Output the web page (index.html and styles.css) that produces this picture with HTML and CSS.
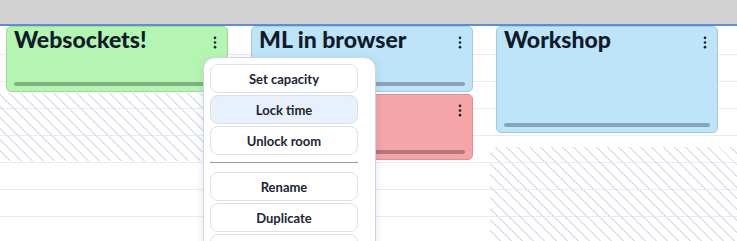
FILE: index.html
```html
<!DOCTYPE html>
<html lang="en">
<head>
  <meta charset="UTF-8" />
  <title>Schedule</title>
  <link rel="stylesheet" href="styles.css">
</head>
<body>

  <div class="topbar"></div>

  <div class="board">
    <div class="col">
      <div class="blocked blocked-a"></div>
      <div class="slot slot-green slot-short">
        <h2>Websockets!</h2>
        <span class="kebab"><svg viewBox="0 0 4 14"><circle cx="2" cy="2" r="1.4"/><circle cx="2" cy="7" r="1.4"/><circle cx="2" cy="12" r="1.4"/></svg></span>
        <div class="bar"></div>
      </div>
    </div>

    <div class="col">
      <div class="slot slot-blue slot-short">
        <h2>ML in browser</h2>
        <span class="kebab"><svg viewBox="0 0 4 14"><circle cx="2" cy="2" r="1.4"/><circle cx="2" cy="7" r="1.4"/><circle cx="2" cy="12" r="1.4"/></svg></span>
        <div class="bar"></div>
      </div>
      <div class="slot slot-red slot-second">
        <h2></h2>
        <span class="kebab"><svg viewBox="0 0 4 14"><circle cx="2" cy="2" r="1.4"/><circle cx="2" cy="7" r="1.4"/><circle cx="2" cy="12" r="1.4"/></svg></span>
        <div class="bar"></div>
      </div>
    </div>

    <div class="col">
      <div class="slot slot-blue slot-long">
        <h2>Workshop</h2>
        <span class="kebab"><svg viewBox="0 0 4 14"><circle cx="2" cy="2" r="1.4"/><circle cx="2" cy="7" r="1.4"/><circle cx="2" cy="12" r="1.4"/></svg></span>
        <div class="bar"></div>
      </div>
      <div class="blocked blocked-b"></div>
    </div>
  </div>

  <!-- context menu -->
  <div class="menu">
    <button>Set capacity</button>
    <button class="active">Lock time</button>
    <button>Unlock room</button>
    <hr>
    <button>Rename</button>
    <button>Duplicate</button>
    <button></button>
  </div>

</body>
</html>
```

FILE: styles.css
```css
body {
  margin: 0;
  font-family: 'Lato', 'Open Sans', sans-serif;
  background-color: #fff;
  color: #0f1b2b;
  overflow: hidden;
  height: 241px;
}

.topbar {
  height: 24px;
  background-color: #d3d3d3;
  border-bottom: 2px solid #5b8fd2;
}

.board {
  display: grid;
  grid-template-columns: 245px 245px 247px;
  height: 215px;
}

.col {
  position: relative;
  background-image: repeating-linear-gradient(to bottom, transparent 0 26px, #e8ebf0 26px 27px);
  background-position: 0 2px;
}

.blocked {
  position: absolute;
  left: 0;
  right: 0;
  background-image: repeating-linear-gradient(45deg, transparent 0 6.5px, #dce1ea 6.5px 7.9px);
}

.blocked-a {
  top: 67px;
  height: 68px;
}

.blocked-b {
  top: 121px;
  bottom: 0;
}

.slot {
  position: absolute;
  left: 6px;
  width: 222px;
  box-sizing: border-box;
  border: 1px solid;
  border-radius: 5px;
}

.slot-short {
  top: 0;
  height: 66px;
}

.slot-second {
  top: 68px;
  height: 66px;
}

.slot-long {
  top: 0;
  height: 107px;
}

.slot-green {
  background-color: #b4f6b1;
  border-color: #a0d99d;
}

.slot-blue {
  background-color: #bde4f8;
  border-color: #a5c9de;
}

.slot-red {
  background-color: #f5a5a8;
  border-color: #dc9195;
}

.slot h2 {
  margin: 0;
  padding: 0 0 0 7px;
  font-size: 23px;
  font-weight: 900;
  line-height: 24px;
}

.kebab {
  position: absolute;
  top: 9px;
  right: 10px;
  width: 4px;
  height: 13px;
}

.kebab svg {
  display: block;
  width: 4px;
  height: 13px;
  fill: #1a2433;
}

.slot .bar {
  position: absolute;
  left: 7px;
  right: 7px;
  bottom: 5px;
  height: 4px;
  border-radius: 2px;
}

.slot-green .bar {
  background-color: #7eb47b;
}

.slot-blue .bar {
  background-color: #87a5b9;
}

.slot-red .bar {
  background-color: #b5767c;
}

.menu {
  position: absolute;
  left: 203px;
  top: 57px;
  width: 173px;
  height: 200px;
  box-sizing: border-box;
  padding: 6px 17px 0 6px;
  background-color: #fff;
  border: 1px solid #cbd5e4;
  border-radius: 12px;
  box-shadow: 0 2px 10px rgba(40, 60, 90, 0.12);
  display: flex;
  flex-direction: column;
  gap: 2px;
}

.menu button {
  height: 29px;
  flex: none;
  background-color: #fff;
  border: 1px solid #dde2e8;
  border-radius: 8px;
  font-family: inherit;
  font-size: 13px;
  font-weight: 700;
  color: #1b2533;
  cursor: pointer;
}

.menu button.active {
  background-color: #e8f0fc;
  border-color: #d6dfeb;
}

.menu hr {
  margin: 5px 0 7px;
  border: none;
  border-top: 1px solid #9a9a9a;
}
```
